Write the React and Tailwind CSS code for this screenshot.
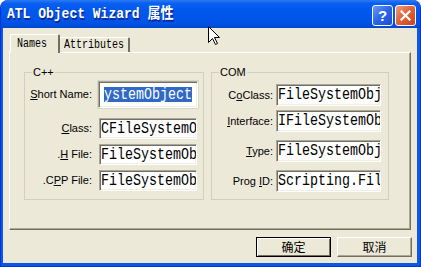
const LABEL = "font-['Liberation_Sans',Arial,sans-serif] text-[11px] leading-[13px] text-black whitespace-nowrap";
const MONO = "font-['Liberation_Mono','Courier_New',monospace]";

function U({ children }) {
  return <span className="underline underline-offset-[1px] decoration-[1px]">{children}</span>;
}

function Edit({ size, text }) {
  return (
    <div
      className={`${size} shrink-0 bg-white border border-t-[#ACA899] border-l-[#ACA899] border-b-white border-r-white shadow-[inset_1px_1px_0_#716F64,inset_-1px_-1px_0_#F1EFE2] overflow-hidden flex items-center pl-[1px]`}
    >
      <span className={`${MONO} text-[13.33px] leading-[14px] whitespace-nowrap inline-block scale-y-[1.25] text-black`}>
        {text}
      </span>
    </div>
  );
}

function Cursor() {
  return (
    <svg className="absolute left-[207px] top-[26px]" width="13" height="20" viewBox="0 0 13 20">
      <path
        d="M0.5 0.5 L0.5 16.5 L4.5 12.5 L7.5 18.5 L9.5 17.5 L6.5 11.5 L11.5 11.5 Z"
        fill="white"
        stroke="black"
        strokeWidth="1"
        strokeLinejoin="miter"
      />
    </svg>
  );
}

export default function App() {
  return (
    <div className="w-[421px] h-[267px] bg-white">
      <div className="relative w-[421px] h-[267px] rounded-t-[8px] overflow-hidden flex flex-col bg-[#0A58E6] border-x border-b border-[#0831D9]">
        {/* Title bar */}
        <div className="h-[28px] shrink-0 flex items-center pl-[6px] pr-[4px] bg-[linear-gradient(to_bottom,#2A7BF5_0%,#0A5FEF_12%,#0058EE_35%,#0055E8_70%,#0050DE_90%,#0046C8_100%)]">
          <span
            className={`font-['Liberation_Mono','Noto_Sans_CJK_SC',monospace] font-bold text-[13px] leading-[16px] text-white inline-block scale-y-[1.12] pt-[2px] whitespace-pre [text-shadow:1px_1px_0_#0A2A9A]`}
          >
            ATL Object Wizard 属性
          </span>
          <div className="ml-auto flex gap-[2px] mt-[2px]">
            <div className="w-[21px] h-[21px] rounded-[3px] border border-white bg-[linear-gradient(135deg,#6A9CF8_0%,#2B64E6_50%,#1B4FD6_100%)] flex items-center justify-center">
              <span className="font-['Liberation_Sans',Arial,sans-serif] font-bold text-[15px] leading-[15px] text-white">?</span>
            </div>
            <div className="w-[21px] h-[21px] rounded-[3px] border border-white bg-[linear-gradient(135deg,#EFA085_0%,#E2643C_45%,#C9431E_100%)] flex items-center justify-center">
              <svg width="11" height="11" viewBox="0 0 11 11">
                <path d="M1.5 1.5 L9.5 9.5 M9.5 1.5 L1.5 9.5" stroke="white" strokeWidth="2.2" strokeLinecap="square" />
              </svg>
            </div>
          </div>
        </div>

        {/* Client area */}
        <div className="flex-1 ml-[2px] mr-[3px] mb-[3px] bg-[#ECE9D8] flex flex-col pt-[6px]">
          {/* Tabs */}
          <div className="flex items-end ml-[7px] h-[18px]">
            <div className="relative z-10 w-[50px] h-[19px] -mb-[1px] bg-[#ECE9D8] border-t border-l border-white border-r-[2px] border-r-[#716F64] rounded-tr-[2px] pl-[6px] pt-[4px] flex items-start">
              <span className={`${MONO} text-[10px] leading-[12px] inline-block scale-y-[1.2] text-black`}>Names</span>
            </div>
            <div className="w-[70px] h-[15px] bg-[#ECE9D8] border-t border-white border-r-[2px] border-r-[#716F64] rounded-tr-[2px] pl-[4px] pt-[2px] flex items-start">
              <span className={`${MONO} text-[10px] leading-[12px] inline-block scale-y-[1.2] text-black`}>Attributes</span>
            </div>
          </div>

          {/* Tab panel */}
          <div className="ml-[6px] w-[402px] h-[178px] border border-t-white border-l-white border-r-[#716F64] border-b-[#716F64] shadow-[inset_-1px_-1px_0_#ACA899] flex items-start pt-[19px] pl-[14px]">
            {/* C++ group */}
            <div className="w-[180px] h-[128px] border border-[#D0D0BF] flex flex-col">
              <span className={`${LABEL} -mt-[7px] ml-[7px] px-[1px] self-start bg-[#ECE9D8]`}>C++</span>

              <div className="flex items-center mt-[2px]">
                <span className={`${LABEL} w-[67px] text-right`}>
                  <U>S</U>hort Name:
                </span>
                <div className="ml-[6px] w-[100px] h-[27px] shrink-0 bg-white border border-t-[#ACA899] border-l-[#ACA899] border-b-white border-r-white shadow-[0_0_0_1px_#DAD7C8,inset_1px_1px_0_#716F64,inset_-1px_-1px_0_#F1EFE2] flex items-center pl-[5px] overflow-hidden">
                  <span className={`${MONO} text-[13.33px] leading-[15px] h-[15px] whitespace-nowrap bg-[#316AC5] text-white inline-flex items-center`}>
                    <span className="inline-block scale-y-[1.25]">ystemObject</span>
                  </span>
                </div>
              </div>

              <div className="flex items-center mt-[10px]">
                <span className={`${LABEL} w-[67px] text-right`}>
                  <U>C</U>lass:
                </span>
                <div className="ml-[7px]">
                  <Edit size="w-[98px] h-[21px]" text="CFileSystemObject" />
                </div>
              </div>

              <div className="flex items-center mt-[5px]">
                <span className={`${LABEL} w-[67px] text-right`}>
                  .<U>H</U> File:
                </span>
                <div className="ml-[7px]">
                  <Edit size="w-[98px] h-[21px]" text="FileSystemObject.h" />
                </div>
              </div>

              <div className="flex items-center mt-[5px]">
                <span className={`${LABEL} w-[67px] text-right`}>
                  .C<U>P</U>P File:
                </span>
                <div className="ml-[7px]">
                  <Edit size="w-[98px] h-[21px]" text="FileSystemObject.cpp" />
                </div>
              </div>
            </div>

            {/* COM group */}
            <div className="ml-[7px] w-[178px] h-[128px] border border-[#D0D0BF] flex flex-col">
              <span className={`${LABEL} -mt-[7px] ml-[7px] px-[1px] self-start bg-[#ECE9D8]`}>COM</span>

              <div className="flex items-center mt-[5px]">
                <span className={`${LABEL} w-[61px] text-right`}>
                  C<U>o</U>Class:
                </span>
                <div className="ml-[3px]">
                  <Edit size="w-[105px] h-[22px]" text="FileSystemObject" />
                </div>
              </div>

              <div className="flex items-center mt-[4px]">
                <span className={`${LABEL} w-[61px] text-right`}>
                  <U>I</U>nterface:
                </span>
                <div className="ml-[3px]">
                  <Edit size="w-[105px] h-[22px]" text="IFileSystemObject" />
                </div>
              </div>

              <div className="flex items-center mt-[8px]">
                <span className={`${LABEL} w-[61px] text-right`}>
                  <U>T</U>ype:
                </span>
                <div className="ml-[3px]">
                  <Edit size="w-[105px] h-[22px]" text="FileSystemObject" />
                </div>
              </div>

              <div className="flex items-center mt-[8px]">
                <span className={`${LABEL} w-[61px] text-right`}>
                  Prog <U>I</U>D:
                </span>
                <div className="ml-[3px]">
                  <Edit size="w-[105px] h-[22px]" text="Scripting.FileSystemObject" />
                </div>
              </div>
            </div>
          </div>

          {/* Buttons */}
          <div className="flex justify-end gap-[6px] mt-[7px] mr-[5px]">
            <div className="w-[75px] h-[20px] border border-black bg-[#ECE9D8] shadow-[inset_1px_1px_0_#FFFFFF,inset_-1px_-1px_0_#716F64] flex items-center justify-center">
              <span className="font-['Noto_Sans_CJK_SC',sans-serif] text-[12px] leading-[14px] text-black">确定</span>
            </div>
            <div className="w-[75px] h-[20px] border border-t-white border-l-white border-r-[#716F64] border-b-[#716F64] bg-[#ECE9D8] shadow-[inset_-1px_-1px_0_#ACA899] flex items-center justify-center">
              <span className="font-['Noto_Sans_CJK_SC',sans-serif] text-[12px] leading-[14px] text-black">取消</span>
            </div>
          </div>
        </div>

        <Cursor />
      </div>
    </div>
  );
}
